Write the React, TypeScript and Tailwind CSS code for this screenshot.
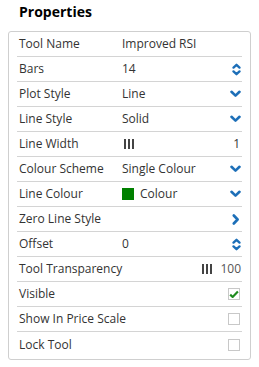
import React from "react";

type Row = {
  label: string;
  kind: "text" | "number" | "select" | "width" | "colour" | "link" | "opacity" | "check";
  value?: string;
  checked?: boolean;
};

const rows: Row[] = [
  { label: "Tool Name", kind: "text", value: "Improved RSI" },
  { label: "Bars", kind: "number", value: "14" },
  { label: "Plot Style", kind: "select", value: "Line" },
  { label: "Line Style", kind: "select", value: "Solid" },
  { label: "Line Width", kind: "width", value: "1" },
  { label: "Colour Scheme", kind: "select", value: "Single Colour" },
  { label: "Line Colour", kind: "colour", value: "Colour" },
  { label: "Zero Line Style", kind: "link" },
  { label: "Offset", kind: "number", value: "0" },
  { label: "Tool Transparency", kind: "opacity", value: "100" },
  { label: "Visible", kind: "check", checked: true },
  { label: "Show In Price Scale", kind: "check", checked: false },
  { label: "Lock Tool", kind: "check", checked: false },
];

function ChevronDown() {
  return (
    <svg width="11" height="8" viewBox="0 0 11 8" className="text-[#1d6fb8]">
      <path d="M1.5 1.8 L5.5 5.6 L9.5 1.8" fill="none" stroke="currentColor" strokeWidth="2.6" strokeLinecap="round" strokeLinejoin="round" />
    </svg>
  );
}

function ChevronRight() {
  return (
    <svg width="8" height="11" viewBox="0 0 8 11" className="text-[#1d6fb8]">
      <path d="M1.8 1.5 L5.6 5.5 L1.8 9.5" fill="none" stroke="currentColor" strokeWidth="2.6" strokeLinecap="round" strokeLinejoin="round" />
    </svg>
  );
}

function Spinner() {
  return (
    <svg width="9" height="13" viewBox="0 0 9 13" className="text-[#1d6fb8]">
      <path d="M1.5 4.6 L4.5 1.8 L7.5 4.6" fill="none" stroke="currentColor" strokeWidth="2.3" strokeLinecap="round" strokeLinejoin="round" />
      <path d="M1.5 8.4 L4.5 11.2 L7.5 8.4" fill="none" stroke="currentColor" strokeWidth="2.3" strokeLinecap="round" strokeLinejoin="round" />
    </svg>
  );
}

function Bars() {
  return (
    <div className="flex gap-[2px] h-[10px]">
      <span className="w-[2px] h-full bg-[#444]" />
      <span className="w-[2px] h-full bg-[#444]" />
      <span className="w-[2px] h-full bg-[#444]" />
    </div>
  );
}

function Checkbox({ checked }: { checked?: boolean }) {
  return (
    <div className="w-[12px] h-[12px] border border-[#c8c8c8] bg-white flex items-center justify-center">
      {checked && (
        <svg width="11" height="9" viewBox="0 0 11 9" className="text-[#1e8a1e]">
          <path d="M1.3 4.6 L4 7.2 L9.8 1.3" fill="none" stroke="currentColor" strokeWidth="2.4" strokeLinejoin="round" />
        </svg>
      )}
    </div>
  );
}

function Value({ row }: { row: Row }) {
  switch (row.kind) {
    case "text":
      return <span>{row.value}</span>;
    case "number":
      return (
        <div className="flex items-center justify-between w-full">
          <span>{row.value}</span>
          <Spinner />
        </div>
      );
    case "select":
      return (
        <div className="flex items-center justify-between w-full">
          <span>{row.value}</span>
          <ChevronDown />
        </div>
      );
    case "width":
      return (
        <div className="flex items-center justify-between w-full pl-[2px]">
          <Bars />
          <span className="pr-[1px]">{row.value}</span>
        </div>
      );
    case "colour":
      return (
        <div className="flex items-center justify-between w-full">
          <div className="flex items-center gap-[6px]">
            <span className="w-[12px] h-[12px] bg-[#008000]" />
            <span>{row.value}</span>
          </div>
          <ChevronDown />
        </div>
      );
    case "link":
      return (
        <div className="flex items-center justify-end w-full pr-[1px]">
          <ChevronRight />
        </div>
      );
    case "opacity":
      return (
        <div className="flex items-center justify-end w-full gap-[8px]">
          <Bars />
          <span className="text-[#555]">{row.value}</span>
        </div>
      );
    case "check":
      return (
        <div className="flex items-center justify-end w-full pr-[1px]">
          <Checkbox checked={row.checked} />
        </div>
      );
  }
}

export default function App() {
  return (
    <div className="w-[259px] h-[367px] bg-white text-[#333] font-['Open_Sans',sans-serif]">
      <div className="pl-[19px] pt-[1px] h-[31px] text-[14px] font-bold text-black leading-[22px]">
        Properties
      </div>
      <div className="ml-[8px] w-[243px] border border-[#cfcfcf] rounded-[3px] px-[8px] pb-[2px] text-[12px]">
        {rows.map((row, i) => (
          <div
            key={row.label}
            className={
              "h-[25px] flex items-center pl-[2px] pr-[1px] " +
              (i < rows.length - 1 ? "border-b border-[#d4d4d4]" : "")
            }
          >
            <div className="w-[103px] shrink-0 whitespace-nowrap">{row.label}</div>
            <div className="flex-1 flex items-center">
              <Value row={row} />
            </div>
          </div>
        ))}
      </div>
    </div>
  );
}
